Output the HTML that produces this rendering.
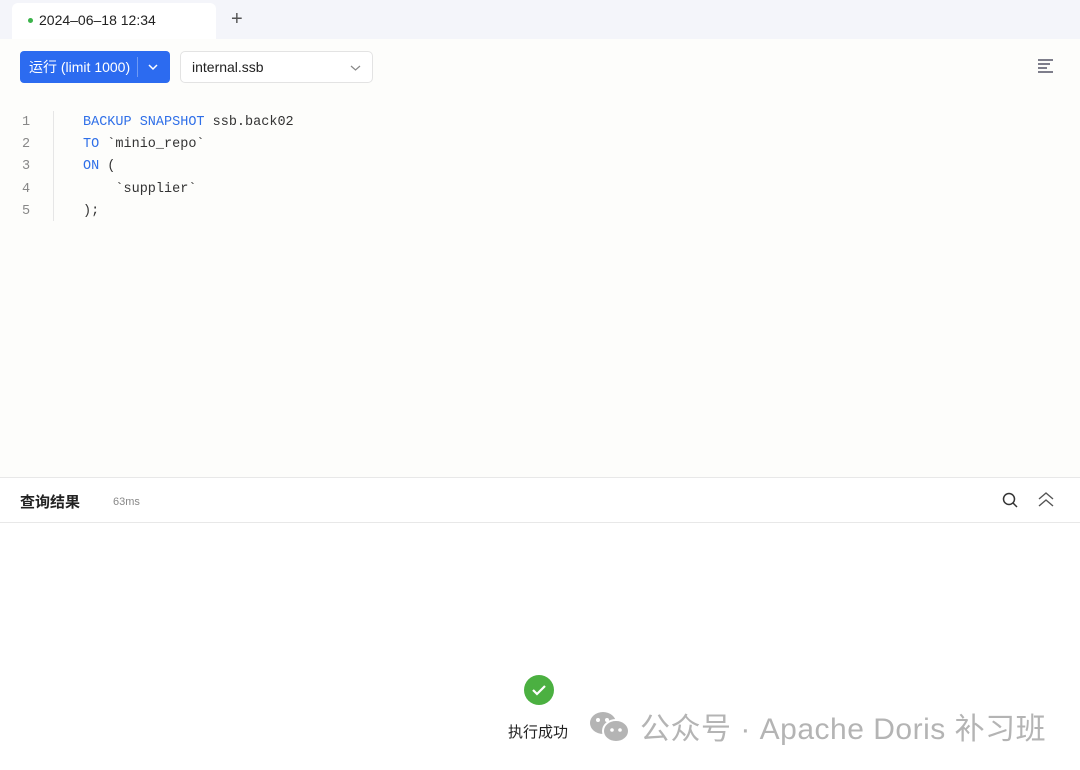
<!DOCTYPE html>
<html><head><meta charset="utf-8"><style>
*{margin:0;padding:0;box-sizing:border-box}
body{width:1080px;height:770px;overflow:hidden;background:#fff;font-family:"Liberation Sans","Noto Sans CJK SC",sans-serif;position:relative}
.top{position:absolute;left:0;top:0;width:1080px;height:39px;background:#f4f5fa}
.tab{position:absolute;left:12px;top:3px;width:204px;height:36px;background:#fff;border-radius:6px 6px 0 0;font-size:14px;color:#222;line-height:34px;padding-left:27px}
.tab:before{content:"";position:absolute;left:16px;top:15px;width:5px;height:5px;border-radius:50%;background:#3bb34a}
.plus{position:absolute;left:231px;top:8px;font-size:20px;color:#555}
.editor{position:absolute;left:0;top:39px;width:1080px;height:438px;background:#fdfdfb}
.run{position:absolute;left:20px;top:51px;width:150px;height:32px;background:#2c6bf0;border-radius:4px;color:#fff;font-size:14px;line-height:32px;padding-left:9px}
.run .sep{position:absolute;left:117px;top:6px;width:1px;height:20px;background:#6f9af5}
.sel{position:absolute;left:180px;top:51px;width:193px;height:32px;border:1px solid #e3e3e3;border-radius:5px;background:#fff;font-size:14px;color:#222;line-height:30px;padding-left:11px}
.code{position:absolute;top:112px;font-family:"Liberation Mono",monospace;font-size:13.5px;line-height:22.2px}
.ln{left:22px;color:#888;}
.vl{position:absolute;left:53px;top:111px;width:1px;height:110px;background:#e6e6e6}
.src{left:83px;color:#333;white-space:pre}
.k{color:#2f6fe8}
.bar{position:absolute;left:0;top:477px;width:1080px;height:46px;border-top:1px solid #e8e8e8;border-bottom:1px solid #e8e8e8;background:#fff}
.bar b{position:absolute;left:20px;top:13px;font-size:15px;color:#222}
.bar span{position:absolute;left:113px;top:18px;font-size:11px;color:#888}
.ok{position:absolute;left:524px;top:675px;width:30px;height:30px;border-radius:50%;background:#4bb041}
.okt{position:absolute;left:508px;top:721px;font-size:15px;color:#222}
.wm{position:absolute;left:640px;top:704px;font-size:30px;color:#b4b4b4;letter-spacing:0.5px}
</style></head><body>
<div class="top"></div>
<div class="tab">2024–06–18 12:34</div>
<div class="plus">+</div>
<div class="editor"></div>
<div class="run">运行 (limit 1000)<div class="sep"></div>
<svg style="position:absolute;left:128px;top:12px" width="10" height="8"><path d="M1 2l4 4 4-4" stroke="#fff" stroke-width="1.5" fill="none"/></svg></div>
<div class="sel">internal.ssb
<svg style="position:absolute;left:169px;top:12px" width="11" height="8"><path d="M1 2l4.5 4 4.5-4" stroke="#888" stroke-width="1.2" fill="none"/></svg></div>
<svg style="position:absolute;left:1037px;top:58px" width="18" height="16"><path d="M1 2h15M1 6h12M1 10h9M1 14h15" stroke="#556" stroke-width="1.6"/></svg>
<div class="code ln">1<br>2<br>3<br>4<br>5</div>
<div class="vl"></div>
<div class="code src"><span class="k">BACKUP SNAPSHOT</span> ssb.back02
<span class="k">TO</span> `minio_repo`
<span class="k">ON</span> (
    `supplier`
);</div>
<div class="bar"><b>查询结果</b><span>63ms</span>
<svg style="position:absolute;left:1001px;top:13px" width="18" height="18"><circle cx="8" cy="8" r="5.5" stroke="#333" stroke-width="1.5" fill="none"/><path d="M12 12l4 4" stroke="#333" stroke-width="1.5"/></svg>
<svg style="position:absolute;left:1037px;top:13px" width="18" height="18"><path d="M2 8l7-6 7 6M2 15l7-6 7 6" stroke="#555" stroke-width="1.4" fill="none"/></svg>
</div>
<div class="ok"><svg width="30" height="30"><path d="M9 15l4 4 8-8" stroke="#fff" stroke-width="2.2" fill="none"/></svg></div>
<div class="okt">执行成功</div>
<svg style="position:absolute;left:588px;top:709px" width="44" height="36"><ellipse cx="15" cy="14" rx="13" ry="11" fill="#b4b4b4"/><ellipse cx="28" cy="22" rx="13" ry="11" fill="#b4b4b4" stroke="#fff" stroke-width="2"/><circle cx="10" cy="11" r="2" fill="#fff"/><circle cx="19" cy="11" r="2" fill="#fff"/><circle cx="24" cy="21" r="1.8" fill="#fff"/><circle cx="32" cy="21" r="1.8" fill="#fff"/></svg>
<div class="wm">公众号 · Apache Doris 补习班</div>
</body></html>
